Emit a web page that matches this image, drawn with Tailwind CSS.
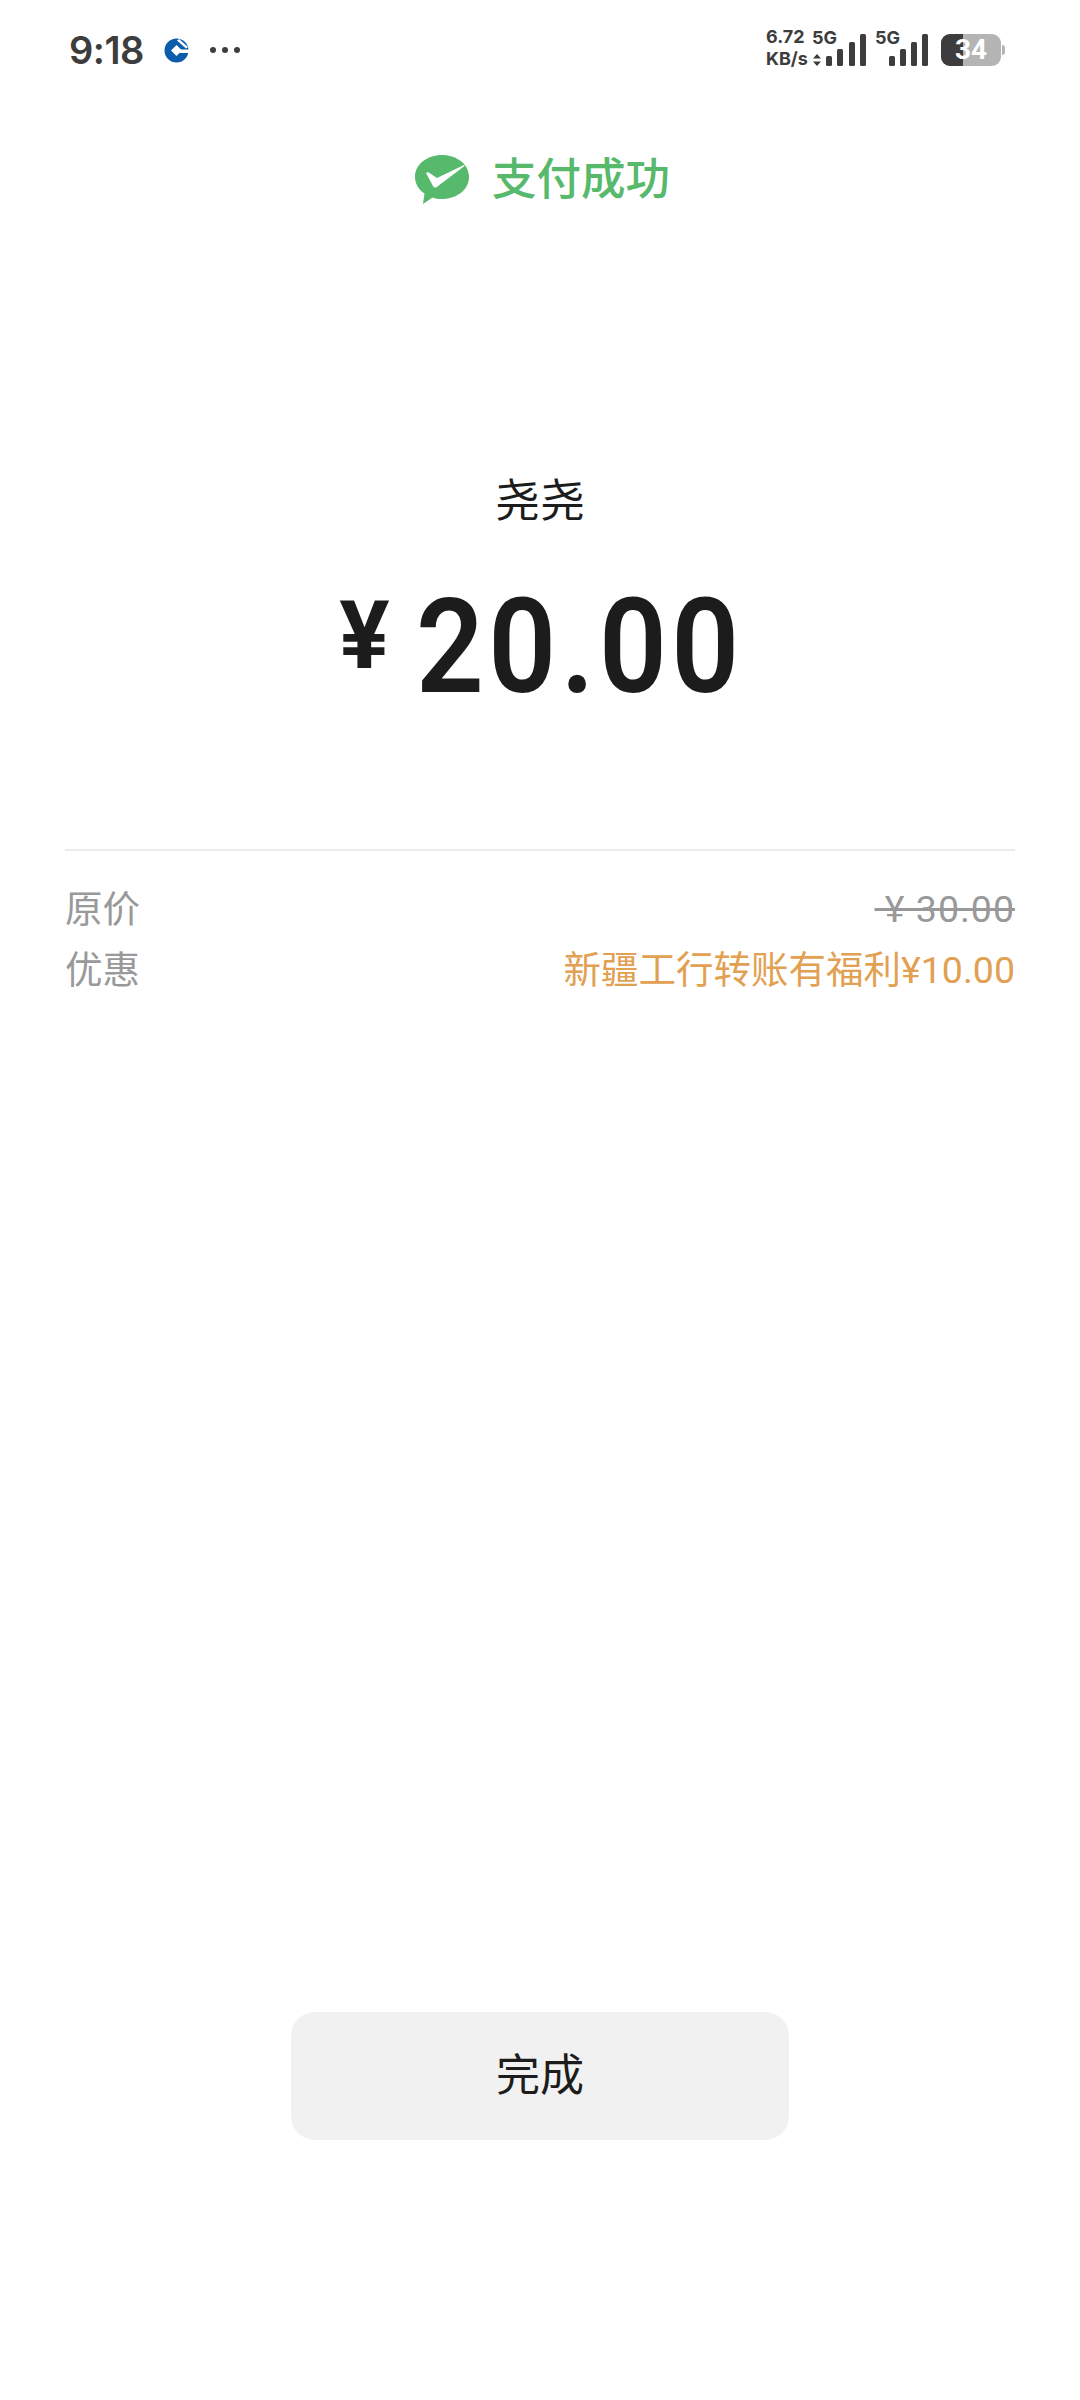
<!DOCTYPE html>
<html lang="zh-CN">
<head>
  <meta charset="UTF-8" />
  <meta name="viewport" content="width=device-width, initial-scale=1.0" />
  <title>支付成功</title>
  <script src="https://cdn.jsdelivr.net/npm/@tailwindcss/browser@4"></script>
</head>
<body class="bg-white font-['Roboto','Noto_Sans_CJK_SC',sans-serif]">
  <div class="w-[1080px] h-[2400px] flex flex-col bg-white overflow-hidden">
    <!-- status bar -->
    <header class="h-[100px] shrink-0 pl-[69px] pr-[75px] flex items-center justify-between text-[#3d3d3d]">
      <div class="flex items-center">
        <span class="text-[38px] leading-none font-semibold font-['Inter','Noto_Sans',sans-serif] tracking-[-0.5px]">9:18</span>
        <svg class="ml-[20px] w-[25px] h-[25px]" viewBox="0 0 25 25">
          <circle cx="12.5" cy="12.5" r="12" fill="#0b5cab" />
          <path d="M12.5 7 L18 12.5 L12.5 18 L7 12.5 Z" fill="#fff" />
          <path d="M16 11.5 H25 V15 H16 Z" fill="#fff" />
          <path d="M13 2.5 L15 1 L24 9 L22 10.5 Z" fill="#fff" />
        </svg>
        <div class="ml-[21px] flex gap-[6px]">
          <span class="w-[6px] h-[6px] rounded-full bg-[#3d3d3d]"></span>
          <span class="w-[6px] h-[6px] rounded-full bg-[#3d3d3d]"></span>
          <span class="w-[6px] h-[6px] rounded-full bg-[#3d3d3d]"></span>
        </div>
      </div>
      <div class="flex items-end h-[32px] font-['Inter','Noto_Sans',sans-serif] font-bold">
        <div class="w-[45px] -mb-[4px] flex flex-col text-[18px] leading-[22px] whitespace-nowrap">
          <span>6.72</span>
          <span>KB/s</span>
        </div>
        <div class="ml-[1px] flex items-end">
          <div class="flex flex-col">
            <span class="text-[18px] leading-[17px] mb-[3px]">5G</span>
            <div class="flex items-end gap-[5px] ml-[1px]">
              <svg class="w-[8px] h-[12px]" viewBox="0 0 8 12"><path d="M4 0 L8 4.5 H0 Z M0 7.5 H8 L4 12 Z" fill="#3d3d3d" /></svg>
              <span class="w-[6px] h-[10px] rounded-[1.5px] bg-[#3d3d3d]"></span>
              <span class="w-[6px] h-[17px] rounded-[1.5px] bg-[#3d3d3d]"></span>
            </div>
          </div>
          <span class="ml-[6px] w-[6px] h-[24px] rounded-[1.5px] bg-[#3d3d3d]"></span>
          <span class="ml-[5px] w-[6px] h-[32px] rounded-[1.5px] bg-[#3d3d3d]"></span>
        </div>
        <div class="ml-[9px] flex items-end">
          <div class="flex flex-col items-start">
            <span class="text-[18px] leading-[17px] mb-[3px]">5G</span>
            <div class="ml-[14px] flex items-end gap-[5px]">
              <span class="w-[6px] h-[10px] rounded-[1.5px] bg-[#3d3d3d]"></span>
              <span class="w-[6px] h-[17px] rounded-[1.5px] bg-[#3d3d3d]"></span>
            </div>
          </div>
          <span class="ml-[5px] w-[6px] h-[24px] rounded-[1.5px] bg-[#3d3d3d]"></span>
          <span class="ml-[5px] w-[6px] h-[32px] rounded-[1.5px] bg-[#3d3d3d]"></span>
        </div>
        <div class="ml-[13px] relative w-[60px] h-[32px] rounded-[9px] bg-[#b4b4b4] overflow-hidden">
          <div class="absolute inset-y-0 left-0 w-[22px] bg-[#3d3d3d]"></div>
          <span class="absolute inset-0 flex items-center justify-center text-white text-[28px] leading-none font-bold font-['Roboto',sans-serif]">34</span>
        </div>
        <span class="ml-[1px] mb-[11px] w-[3px] h-[10px] rounded-r-sm bg-[#b4b4b4]"></span>
      </div>
    </header>

    <!-- result title -->
    <div class="mt-[52px] ml-[4px] flex items-center justify-center">
      <svg class="w-[56px] h-[52px] mr-[22px]" viewBox="0 0 56 52">
        <path d="M28 1 C43 1 55 10.5 55 23 C55 35.5 43 45 28 45 C24.5 45 21.5 44.5 18.5 43.5 L9 50 L10.5 39.5 C4.5 35.5 1 29.6 1 23 C1 10.5 13 1 28 1 Z" fill="#56b96b" />
        <path d="M12 19 L14 18 L23 24 L50 11 L50.5 12 L24 32 C22 34 20 34 19 32 Z" fill="#fff" />
      </svg>
      <h1 class="text-[44.5px] leading-[56px] text-[#56b96b] font-medium">支付成功</h1>
    </div>

    <!-- payee and amount -->
    <p class="mt-[266px] text-center text-[45px] leading-[56px] text-[#1c1c1c]">尧尧</p>
    <div class="mt-[51px] h-[132px] flex items-center justify-center text-[#1c1c1c]">
      <span class="text-[94px] leading-none font-bold mr-[26px] mb-[22px]">¥</span>
      <span class="text-[132px] leading-none font-semibold tracking-[5px] scale-x-[0.9] origin-left -mr-[39px]">20.00</span>
    </div>

    <!-- price rows -->
    <div class="mt-[136px] mx-[65px] border-t-2 border-[#ececec] pt-[28px] text-[37.5px] leading-[61px]">
      <div class="flex justify-between text-[#999999]">
        <span>原价</span>
        <span class="line-through tracking-[1px]">&nbsp;¥ 30.00</span>
      </div>
      <div class="flex justify-between text-[#999999]">
        <span>优惠</span>
        <span class="text-[#e2a052]">新疆工行转账有福利¥10.00</span>
      </div>
    </div>

    <!-- done button -->
    <div class="mt-auto mb-[260px] flex justify-center">
      <button class="w-[498px] h-[128px] rounded-[24px] bg-[#f1f1f1] text-[44px] text-[#1c1c1c]">完成</button>
    </div>
  </div>
</body>
</html>
